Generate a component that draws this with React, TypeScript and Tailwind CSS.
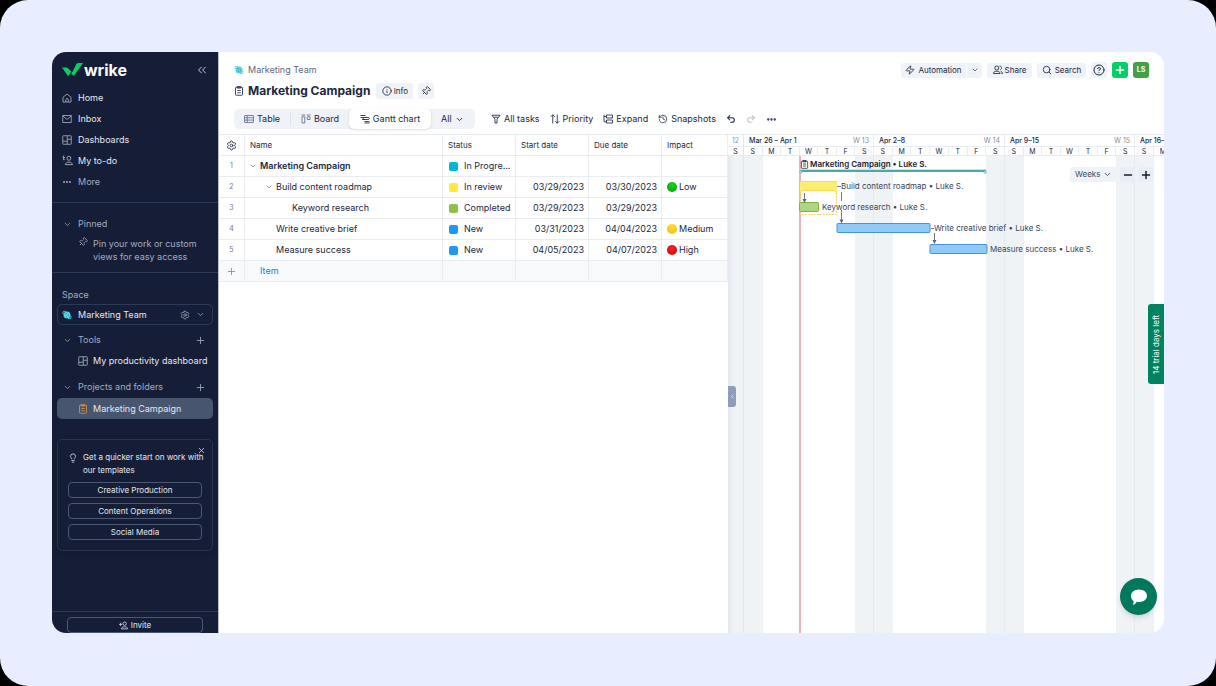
import React from "react"
import {
  ChevronDown,
  ChevronLeft,
  ChevronsLeft,
  CircleQuestionMark,
  Ellipsis,
  History,
  Info,
  Lightbulb,
  Minus,
  Pin,
  Plus,
  Redo2,
  Search,
  Settings,
  Undo2,
  X,
  Zap,
} from "lucide-react"

const Svg = ({ children, className = "size-[10px]" }: { children: React.ReactNode; className?: string }) => (
  <svg
    viewBox="0 0 20 20"
    fill="none"
    stroke="currentColor"
    strokeWidth="1.7"
    className={`shrink-0 ${className}`}
    aria-hidden="true"
  >
    {children}
  </svg>
)

const HomeIcon = () => (
  <Svg>
    <path d="M2 8.500L10 2l8 6.500V18H2zM7.500 18v-4.500a2.500 2.500 0 0 1 5 0V18" />
  </Svg>
)

const InboxIcon = () => (
  <Svg>
    <path d="M1.500 3h17v14h-17zM1.500 3.500L10 11l8.500-7.500" />
  </Svg>
)

const DashboardIcon = () => (
  <Svg>
    <rect x="1.5" y="1.5" width="17" height="17" rx="1" />
    <path d="M10.5 1.5v17M1.5 12.5h9M10.5 8.5h8" />
  </Svg>
)

const TodoIcon = () => (
  <Svg className="size-[11px]">
    <circle cx="12.5" cy="6" r="3.6" />
    <path d="M6 17.5c.6-3 2.400-4 4.500-4.500h4c2.200.5 3.900 1.500 4.500 4.500zM1 4.500h4M2 8.500h3M3 1v7" />
  </Svg>
)

const InviteIcon = () => (
  <Svg className="size-[9px]">
    <circle cx="12.500" cy="6" r="3.800" />
    <path d="M5 17.500c.8-3.200 2.800-4.200 5-4.500h5c2.200.4 3.600 1.500 4 4.500zM3.500 4v7M0 7.500h7" />
  </Svg>
)

const ShareIcon = () => (
  <Svg>
    <circle cx="7.500" cy="6" r="4" />
    <path d="M1 17c.4-3 2-4.500 4.500-4.500h4c2.500 0 4.100 1.500 4.500 4.500zM13 2.200c4.500-.6 5.800 5.800 1.500 7.400M15.500 12.800c2.200.4 3.300 1.700 3.500 4.200h-2.500" />
  </Svg>
)

const ClipboardIcon = ({ className = "size-[10px]" }: { className?: string }) => (
  <Svg className={className}>
    <rect x="3" y="2.500" width="14" height="16" rx="1.500" />
    <path d="M6.500 1.200h7v3h-7zM6.500 9h7M6.500 13.500h7" />
  </Svg>
)

const TableIcon = () => (
  <Svg>
    <rect x="1" y="3" width="18" height="14" rx="1" />
    <path d="M1 7.500h18M1 12.200h18M6.500 3v14" />
  </Svg>
)

const BoardIcon = () => (
  <Svg>
    <path d="M1 2h7.500M11.500 2H19M2 5.500h5.500V18H2zM12.500 5.500H18V11h-5.500z" />
  </Svg>
)

const GanttIcon = () => (
  <Svg>
    <path d="M1 3h10M1 7h7M4 11h6M8.500 7h8a2 2 0 0 1 0 4h-8a2 2 0 0 1 0-4zM9 15h8a1.500 1.500 0 0 1 0 3h-8" />
  </Svg>
)

const FilterIcon = () => (
  <Svg>
    <path d="M2 2.500h16l-6 8V18H8v-7.500zM6 6.500h8" />
  </Svg>
)

const PriorityIcon = () => (
  <Svg>
    <path d="M5.500 19V1.500M1.500 5.500l4-4 4 4M14.500 1v17.500M10.500 14.500l4 4 4-4" />
  </Svg>
)

const ExpandIcon = () => (
  <Svg>
    <path d="M2 1.500v14h5M2 5h5M7 2h12v6H7zM7 12h12v6H7z" />
  </Svg>
)

const PlanetIcon = () => (
  <svg viewBox="0 0 20 20" className="size-[10px] shrink-0" aria-hidden="true">
    <circle cx="10" cy="10" r="7" fill="#4fd3e0" />
    <path d="M2.500 8C1 3 3 1.500 8 3.500M17.500 12c1.500 5-.5 6.500-5.500 4.500" fill="none" stroke="#4fd3e0" strokeWidth="2" />
    <path d="M7 7.500h3M12 10.500h2M8 13h2" stroke="#2a93a8" strokeWidth="1.400" />
  </svg>
)

const navItems = [
  { label: "Home", icon: <HomeIcon /> },
  { label: "Inbox", icon: <InboxIcon /> },
  { label: "Dashboards", icon: <DashboardIcon /> },
  { label: "My to-do", icon: <TodoIcon /> },
  { label: "More", icon: <Ellipsis className="size-[10px]" strokeWidth={3} />, muted: true },
]

const templates = ["Creative Production", "Content Operations", "Social Media"]

const SectionTitle = ({ title, add }: { title: string; add?: boolean }) => (
  <div className="flex h-5 items-center pl-[11px] pr-[12px] text-[#a3abc0]">
    <button className="flex items-center" aria-expanded="true">
      <ChevronDown className="mr-[6px] size-[9px]" />
      {title}
    </button>
    {add && (
      <button className="ml-auto" aria-label={`Add to ${title}`}>
        <Plus className="size-[11px]" strokeWidth={1.8} />
      </button>
    )}
  </div>
)

const Sidebar = () => (
  <aside className="flex w-[166px] shrink-0 flex-col bg-[#161e37] text-[9px] text-[#e4e7ef]">
    <div className="flex h-[35px] items-center pl-[10px] pr-[9px]">
      <svg viewBox="0 0 42 26" className="mr-px h-[13px] w-[21px]" aria-label="Wrike logo">
        <path d="M0 9h8c2 0 3 .6 4.500 2l6 6-5 8c-.5.800-1.500.800-2.200 0z" fill="#08cf65" />
        <path d="M21 17.500l6.500-13C28.500 2 30 0 33 0h9L24.500 24.500c-.8 1-1.700 1-2.500 0l-3.500-4z" fill="#08cf65" />
      </svg>
      <span className="text-[16px] font-bold leading-4 text-white">wrike</span>
      <button className="ml-auto text-[#c4cad8]" aria-label="Collapse sidebar">
        <ChevronsLeft className="size-[14px]" strokeWidth={1.7} />
      </button>
    </div>

    <nav className="border-b border-[#2c3854] pb-[10px]">
      {navItems.map(item => (
        <a
          key={item.label}
          href="#"
          className={`flex h-[21px] items-center pl-[10px] ${item.muted ? "text-[#a3abc0]" : ""}`}
        >
          <span className="flex w-4 text-[#a3abc0]">{item.icon}</span>
          {item.label}
        </a>
      ))}
    </nav>

    <section className="border-b border-[#2c3854] pb-[9px] pt-[11px] text-[#a3abc0]">
      <SectionTitle title="Pinned" />
      <div className="flex gap-[5px] pl-[26px] pt-[3px] leading-[13px]">
        <Pin className="size-[10px] shrink-0 rotate-45" strokeWidth={1.8} />
        <p>
          Pin your work or custom
          <br />
          views for easy access
        </p>
      </div>
    </section>

    <section className="pt-[15px]">
      <label htmlFor="space" className="block pl-[10px] leading-[13px] text-[#a3abc0]">
        Space
      </label>
      <div className="mx-[5px] mt-[3px] flex h-[21px] items-center rounded-[5px] border border-[#2c3a58] pl-1 pr-[7px]">
        <PlanetIcon />
        <select id="space" className="ml-[6px] min-w-0 flex-1 appearance-none bg-transparent">
          <option>Marketing Team</option>
        </select>
        <button className="mr-[6px] text-[#a3abc0]" aria-label="Space settings">
          <Settings className="size-[10px]" strokeWidth={1.8} />
        </button>
        <ChevronDown className="size-[9px] text-[#a3abc0]" />
      </div>
      <div className="pt-[5px]">
        <SectionTitle title="Tools" add />
        <a href="#" className="flex h-[21px] items-center gap-[5px] whitespace-nowrap pl-[26px]">
          <span className="text-[#a3abc0]">
            <DashboardIcon />
          </span>
          My productivity dashboard
        </a>
      </div>
      <div className="pt-[6px]">
        <SectionTitle title="Projects and folders" add />
        <a
          href="#"
          className="mx-[5px] mt-px flex h-[21px] items-center gap-[5px] rounded-[5px] bg-[#48556f] pl-[21px]"
        >
          <ClipboardIcon className="size-[10px] text-[#d0943c]" />
          Marketing Campaign
        </a>
      </div>
    </section>

    <section className="relative mx-[5px] mt-[20px] rounded-[5px] border border-[#2a3450] px-[10px] pb-[10px] pt-[11px] text-[8px] shadow-md">
      <button className="absolute right-[6px] top-[6px]" aria-label="Dismiss">
        <X className="size-[9px]" />
      </button>
      <div className="flex gap-[5px] whitespace-nowrap leading-[13px]">
        <Lightbulb className="mt-[2px] size-[10px] shrink-0" strokeWidth={1.8} />
        <p>
          Get a quicker start on work with
          <br />
          our templates
        </p>
      </div>
      <div className="mt-[5px] flex flex-col gap-[5px]">
        {templates.map(name => (
          <button key={name} className="h-4 rounded-[4px] border border-[#4b5874]">
            {name}
          </button>
        ))}
      </div>
    </section>

    <div className="mt-auto border-t border-[#2c3854] px-[15px] pt-[5px] text-[8px]">
      <button className="flex h-4 w-full items-center justify-center gap-[3px] rounded-[4px] border border-[#4b5874]">
        <InviteIcon />
        Invite
      </button>
    </div>
  </aside>
)

const tools = [
  { label: "All tasks", icon: <FilterIcon /> },
  { label: "Priority", icon: <PriorityIcon /> },
  { label: "Expand", icon: <ExpandIcon /> },
  { label: "Snapshots", icon: <History className="size-[10px]" strokeWidth={1.8} /> },
]

const Header = () => (
  <header className="border-b border-[#e6eaf0] px-[15px] pb-[5px] pt-[10px] text-[9px]">
    <div className="flex h-4 items-center gap-[5px] text-[8px]">
      <a href="#" className="mr-auto flex items-center gap-1 text-[9px] text-[#5c6884]">
        <PlanetIcon />
        Marketing Team
      </a>
      <div className="flex h-[15px] items-center rounded-[3px] bg-[#eff2f7]">
        <button className="flex h-full w-[65px] items-center justify-center gap-[3px]">
          <Zap className="size-[10px]" />
          Automation
        </button>
        <button
          className="flex h-full w-4 items-center justify-center border-l border-white"
          aria-label="Automation options"
        >
          <ChevronDown className="size-[8px]" />
        </button>
      </div>
      <button className="flex h-[15px] w-[45px] items-center justify-center gap-[2px] rounded-[3px] bg-[#eff2f7]">
        <ShareIcon />
        Share
      </button>
      <button className="flex h-[15px] w-[49px] items-center justify-center gap-[3px] rounded-[3px] bg-[#eff2f7]">
        <Search className="size-[10px]" />
        Search
      </button>
      <button className="flex size-4 items-center justify-center rounded-[3px] bg-[#eff2f7]" aria-label="Help">
        <CircleQuestionMark className="size-[12px]" />
      </button>
      <button className="flex size-4 items-center justify-center rounded-[3px] bg-[#08cf65] text-white" aria-label="Create">
        <Plus className="size-[12px]" strokeWidth={3} />
      </button>
      <button className="size-4 rounded-[3px] bg-[#43a047] text-[7px] font-bold text-white">LS</button>
    </div>

    <div className="mt-[5px] flex h-4 items-center">
      <ClipboardIcon />
      <h1 className="ml-1 mr-[6px] text-[12px] font-bold leading-4">Marketing Campaign</h1>
      <button className="mr-[5px] flex h-4 w-[37px] items-center justify-center gap-[2px] rounded-[3px] bg-[#eff2f7] text-[8px]">
        <Info className="size-[10px]" />
        Info
      </button>
      <button className="flex size-4 items-center justify-center rounded-[3px] bg-[#eff2f7]" aria-label="Pin">
        <Pin className="size-[10px] rotate-45" />
      </button>
    </div>

    <div className="mt-[10px] flex h-5 items-center">
      <div className="flex h-5 items-center rounded-[5px] bg-[#eff2f7]">
        <button className="flex w-[57px] items-center justify-center gap-[3px] border-r border-[#dfe4ec]">
          <span className="text-[#61708f]">
            <TableIcon />
          </span>
          Table
        </button>
        <button className="flex w-[58px] items-center justify-center gap-[3px]">
          <span className="text-[#61708f]">
            <BoardIcon />
          </span>
          Board
        </button>
        <button className="flex h-5 w-[82px] items-center justify-center gap-[3px] rounded-[5px] bg-white shadow">
          <GanttIcon />
          Gantt chart
        </button>
        <div className="flex w-[44px] items-center pl-[10px]">
          <select className="w-[14px] appearance-none" aria-label="Views">
            <option>All</option>
          </select>
          <ChevronDown className="size-[9px]" strokeWidth={2.5} />
        </div>
      </div>
      <div className="ml-4 flex gap-[10px]">
        {tools.map(tool => (
          <button key={tool.label} className="flex items-center gap-[3px]">
            {tool.icon}
            {tool.label}
          </button>
        ))}
        <button aria-label="Undo">
          <Undo2 className="size-[10px]" strokeWidth={2.5} />
        </button>
        <button className="text-[#b9c1d0]" aria-label="Redo" disabled>
          <Redo2 className="size-[10px]" strokeWidth={2.5} />
        </button>
        <button aria-label="More actions">
          <Ellipsis className="size-[11px]" strokeWidth={3} />
        </button>
      </div>
    </div>
  </header>
)

const rows = [
  { name: "Marketing Campaign", pad: "pl-[4px]", open: true, bold: true, color: "bg-[#00b8d0]", status: "In Progre..." },
  {
    name: "Build content roadmap",
    pad: "pl-[20px]",
    open: true,
    color: "bg-[#ffe93b]",
    status: "In review",
    start: "03/29/2023",
    due: "03/30/2023",
    impact: "Low",
    dot: "bg-radial-[at_50%_30%] from-[#17d91c] to-[#05930a]",
  },
  {
    name: "Keyword research",
    pad: "pl-[47px]",
    color: "bg-[#8bc34a]",
    status: "Completed",
    start: "03/29/2023",
    due: "03/29/2023",
  },
  {
    name: "Write creative brief",
    pad: "pl-[31px]",
    color: "bg-[#2196f3]",
    status: "New",
    start: "03/31/2023",
    due: "04/04/2023",
    impact: "Medium",
    dot: "bg-radial-[at_50%_30%] from-[#ffe23a] to-[#f5b800]",
  },
  {
    name: "Measure success",
    pad: "pl-[31px]",
    color: "bg-[#2196f3]",
    status: "New",
    start: "04/05/2023",
    due: "04/07/2023",
    impact: "High",
    dot: "bg-radial-[at_50%_30%] from-[#ff2222] to-[#c40404]",
  },
]

const cell = "border-b border-r border-[#e9edf2] p-0"

const TaskTable = () => (
  <div className="w-[509px] shrink-0">
    <table className="w-full table-fixed border-separate border-spacing-0 whitespace-nowrap text-[9px]">
      <thead>
        <tr className="h-[21px] text-left text-[8px]">
          <th className={`w-[26px] ${cell}`}>
            <button className="mx-auto block" aria-label="Table settings">
              <Settings className="size-[11px]" strokeWidth={1.8} />
            </button>
          </th>
          <th className={`font-normal ${cell} pl-[5px]`}>Name</th>
          <th className={`w-[73px] font-normal ${cell} pl-[5px]`}>Status</th>
          <th className={`w-[73px] font-normal ${cell} pl-[5px]`}>Start date</th>
          <th className={`w-[73px] font-normal ${cell} pl-[5px]`}>Due date</th>
          <th className={`w-[66px] font-normal ${cell} pl-[5px]`}>Impact</th>
        </tr>
      </thead>
      <tbody>
        {rows.map((row, i) => (
          <tr key={row.name} className="h-[21px]">
            <td className={`text-center text-[7px] text-[#6b7794] ${cell}`}>{i + 1}</td>
            <td className={cell}>
              <div className={`flex items-center gap-[3px] ${row.pad} ${row.bold ? "font-semibold" : ""}`}>
                {row.open && <ChevronDown className="size-[8px] text-[#5c6884]" />}
                {row.name}
              </div>
            </td>
            <td className={cell}>
              <div className="flex items-center gap-[6px] pl-[6px]">
                <span className={`size-[9px] shrink-0 rounded-[2px] ${row.color}`} />
                {row.status}
              </div>
            </td>
            <td className={`text-right ${cell} pr-1`}>{row.start}</td>
            <td className={`text-right ${cell} pr-1`}>{row.due}</td>
            <td className={cell}>
              {row.impact && (
                <div className="flex items-center gap-[2px] pl-[5px]">
                  <span className={`size-[10px] rounded-full ${row.dot}`} />
                  {row.impact}
                </div>
              )}
            </td>
          </tr>
        ))}
        <tr className="h-[21px] bg-[#f7f9fb]">
          <td className={cell}>
            <Plus className="mx-auto size-[11px] text-[#7c88a3]" strokeWidth={1.8} />
          </td>
          <td className={`${cell} pl-[15px]`}>
            <a href="#" className="text-[#1c80d8]">
              Item
            </a>
          </td>
          <td className={cell} />
          <td className={cell} />
          <td className={cell} />
          <td className={cell} />
        </tr>
      </tbody>
    </table>
  </div>
)

const fullWeek = ["S", "M", "T", "W", "T", "F", "S"]

const weeks = [
  { label: "Mar 26 – Apr 1", number: "W 13", width: "w-[130px] grid-cols-7", days: fullWeek },
  { label: "Apr 2–8", number: "W 14", width: "w-[131px] grid-cols-7", days: fullWeek },
  { label: "Apr 9–15", number: "W 15", width: "w-[130px] grid-cols-7", days: fullWeek },
  { label: "Apr 16–", width: "w-[38px] grid-cols-2", days: ["S", "M"] },
]

const Calendar = () => (
  <div className="flex min-w-0 flex-1">
    <div className="flex w-4 shrink-0 flex-col border-r border-[#e3e7ed]">
      <div className="h-[12px] border-b border-[#e9edf2] text-center text-[#8a93a8]">12</div>
      <div className="h-[9px] border-b border-[#e9edf2] text-center leading-[9px]">S</div>
      <div className="flex-1 bg-linear-to-r from-[#e3e8ee] to-[#eff3f6] to-40%" />
    </div>
    {weeks.map(week => (
      <div key={week.label} className="flex shrink-0 flex-col">
        <div className="flex h-[12px] justify-between whitespace-nowrap border-b border-r border-[#e9edf2] pl-[5px] pr-1 font-medium">
          <span>{week.label}</span>
          {week.number && <span className="font-normal text-[#8a8f9c]">{week.number}</span>}
        </div>
        <div className={`grid flex-1 ${week.width}`}>
          {week.days.map((day, i) => (
            <div key={i} className="flex flex-col">
              <div className="h-[9px] border-b border-r border-[#e9edf2] text-center leading-[9px]">{day}</div>
              <div
                className={`flex-1 ${i === 0 ? "bg-[#eff3f6]" : ""} ${
                  i === 6 ? "border-r border-[#e6ebef] bg-[#eff3f6]" : ""
                }`}
              />
            </div>
          ))}
        </div>
      </div>
    ))}
  </div>
)

// Coordinates count from the top left corner of the chart body
const labels = [
  { text: "Build content roadmap • Luke S.", place: "left-[113px] top-[25px]" },
  { text: "Keyword research • Luke S.", place: "left-[94px] top-[46px]" },
  { text: "Write creative brief • Luke S.", place: "left-[206px] top-[67px]" },
  { text: "Measure success • Luke S.", place: "left-[262px] top-[88px]" },
]

const Bars = () => (
  <div className="absolute inset-x-0 bottom-0 top-[21px] text-[8px] leading-[10px] text-[#3c4356]">
    <div className="absolute bottom-0 left-[71px] top-0 w-[2px] bg-[#e9b4b8]" />
    <svg width="300" height="110" viewBox="0 0 300 110" className="absolute left-0 top-0" aria-hidden="true">
      <path d="M72 15h186" stroke="#4aa9ad" strokeWidth="2" />
      <path d="M72 13.500h186" stroke="#bfe5e6" />
      <circle cx="73" cy="16" r="1.200" fill="#fff" stroke="#4aa9ad" strokeWidth=".8" />
      <circle cx="257" cy="16" r="1.200" fill="#fff" stroke="#4aa9ad" strokeWidth=".8" />
      <path d="M72.500 36v22.500h36V36" fill="none" stroke="#f7d774" strokeDasharray="2 1" />
      <path d="M72 25h37v12l-3-2H75l-3 2z" fill="#ffed72" />
      <path d="M72 25.500h37M72 37l3-2.500h31l3 2.500" fill="none" stroke="#f6dd55" />
      <rect x="71.500" y="46.500" width="19" height="9" rx="1" fill="#aed581" stroke="#7cb342" />
      <rect x="109" y="67.500" width="93" height="9" rx="1" fill="#90caf9" stroke="#4795d6" />
      <rect x="202" y="88.500" width="57" height="9" rx="1" fill="#90caf9" stroke="#4795d6" />
      <g fill="none" stroke="#747b8a">
        <path d="M76.500 37v8M109 30.500h4M113.500 36v9M113.500 54v12M203 72.500h3M206.500 77v9" />
      </g>
      <path d="M74.500 43h4l-2 4zM111.500 63.500h4l-2 4zM204.500 84h4l-2 4z" fill="#5f6676" />
    </svg>
    <div className="absolute left-[72px] top-[3px] flex items-center gap-px whitespace-nowrap font-semibold text-[#1c2331]">
      <ClipboardIcon className="size-[9px]" />
      Marketing Campaign • Luke S.
    </div>
    {labels.map(label => (
      <div key={label.text} className={`absolute whitespace-nowrap ${label.place}`}>
        {label.text}
      </div>
    ))}
  </div>
)

const Gantt = () => (
  <div className="relative flex min-w-0 flex-1 overflow-hidden text-[7px] leading-[11px]">
    <Calendar />
    <Bars />
    <div className="absolute right-[11px] top-[32px] flex items-center gap-[3px] text-[8px] text-[#3d4a68]">
      <div className="flex h-[15px] w-[47px] items-center rounded-[3px] bg-[#eff2f7] pl-[5px]">
        <select className="w-[28px] appearance-none" aria-label="Time scale">
          <option>Weeks</option>
        </select>
        <ChevronDown className="size-[9px]" strokeWidth={2.5} />
      </div>
      <button className="flex size-[15px] items-center justify-center rounded-[3px] bg-[#e9edf4]" aria-label="Zoom out">
        <Minus className="size-[12px] text-[#161e37]" strokeWidth={3} />
      </button>
      <button className="flex size-[15px] items-center justify-center rounded-[3px] bg-[#e9edf4]" aria-label="Zoom in">
        <Plus className="size-[12px] text-[#161e37]" strokeWidth={3} />
      </button>
    </div>
    <button
      className="absolute left-0 top-[251px] flex h-[21px] w-[8px] items-center justify-center rounded-r-[3px] bg-[#8f9db8] text-white"
      aria-label="Hide table"
    >
      <ChevronLeft className="size-[7px]" />
    </button>
    <button className="absolute right-0 top-[169px] flex h-20 w-4 rotate-180 items-center justify-center rounded-r-[3px] bg-[#00835f] text-[8px] text-white [writing-mode:vertical-rl]">
      14 trial days left
    </button>
    <button
      className="absolute bottom-[18px] right-[7px] flex size-[37px] items-center justify-center rounded-full bg-[#00785c] shadow-md"
      aria-label="Open chat"
    >
      <svg viewBox="0 0 18 18" className="size-[18px]" fill="#fff" aria-hidden="true">
        <path d="M9 1.500c4.700 0 8 2.800 8 6.300S13.700 14 9 14c-.8 0-1.500 0-2.200-.2C5.700 15.500 4.300 16.700 2.700 17c.8-1.200 1-2.600.8-4C1.900 11.700 1 9.900 1 7.800c0-3.500 3.300-6.300 8-6.300z" />
      </svg>
    </button>
  </div>
)

const App = () => (
  <div className="bg-black font-['Inter',sans-serif]">
    <div className="flex min-h-screen rounded-[28px] bg-[#e8edff] px-[52px] pb-[53px] pt-[52px]">
      <div className="flex min-w-0 flex-1 overflow-hidden rounded-[14px] bg-white text-[#1c2740]">
        <Sidebar />
        <main className="flex min-w-0 flex-1 flex-col border-l border-[#b9bfd2]">
          <Header />
          <div className="flex flex-1">
            <TaskTable />
            <Gantt />
          </div>
        </main>
      </div>
    </div>
  </div>
)

export default App
